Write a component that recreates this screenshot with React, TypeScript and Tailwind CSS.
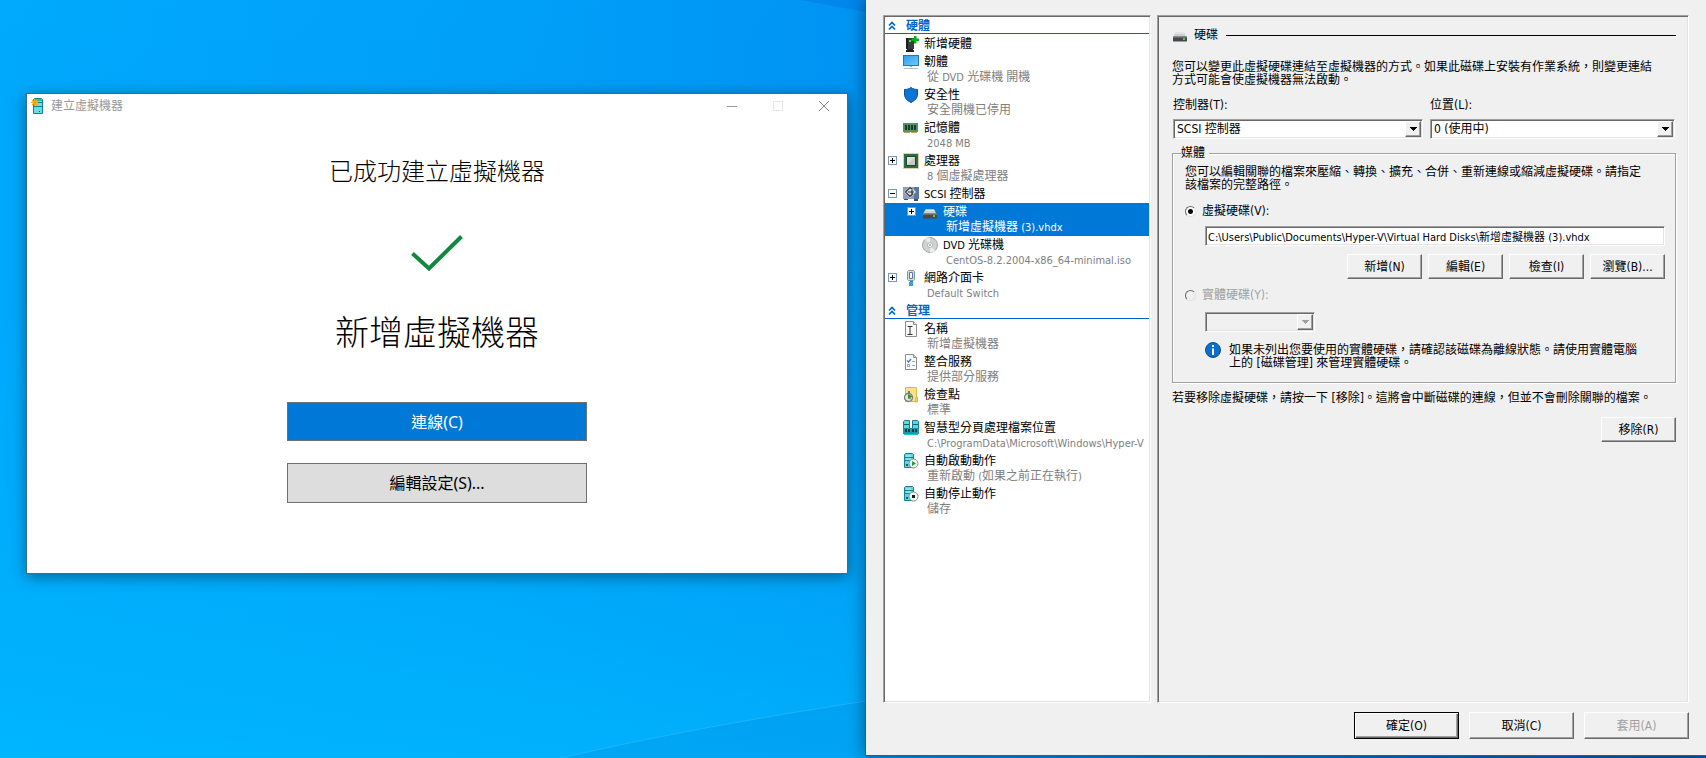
import clsx from "clsx";
import { FC, ReactNode, useState } from "react";

const sunken =
  "border border-t-[#a0a0a0] border-l-[#a0a0a0] border-b-white border-r-white shadow-[inset_1px_1px_0_#696969,inset_-1px_-1px_0_#e3e3e3]";
const raised =
  "border border-t-white border-l-white border-b-[#696969] border-r-[#696969] shadow-[inset_-1px_-1px_0_#a0a0a0]";

// Latin runs in the tree are set one pixel smaller than the CJK text around them
const Mixed: FC<{ text: string }> = ({ text }) => (
  <>
    {text.split(/([\x20-\x7e]+)/).map((part, i) =>
      i % 2 ? (
        <span key={i} className="text-[11px]">
          {part}
        </span>
      ) : (
        part
      ),
    )}
  </>
);

const Svg: FC<{ children: ReactNode }> = ({ children }) => (
  <svg viewBox="0 0 16 16" className="h-4 w-4 shrink-0" aria-hidden="true">
    {children}
  </svg>
);

const DriveIcon = () => (
  <Svg>
    <path d="M3.500 5.500h8.500L14.500 10H1z" fill="#cdcfd1" />
    <path d="M4 5.500h8l1 1.500H3z" fill="#e3e4e6" />
    <rect x="1" y="9.500" width="14" height="5" rx=".5" fill="#48494b" />
    <rect x="1" y="9.500" width="14" height="1" fill="#8a8c8e" />
    <rect x="11" y="11" width="2" height="2" fill="#31e04a" />
  </Svg>
);

const ServerBody = () => (
  <>
    <path d="M1.500 1.500l1-1h7l1 1v13h-9z" fill="#5fd6e0" stroke="#16808c" />
    <path d="M2 4.500h8M2 7.500h8" stroke="#16808c" />
    <path d="M3 3h5M3 6h5" stroke="#b5f2f5" />
    <rect x="3" y="11" width="2" height="2" fill="#0f5e68" />
  </>
);

const icons: Record<string, ReactNode> = {
  add: (
    <Svg>
      <path d="M3 2h8v11H3z" fill="#3b3b3b" />
      <path d="M3 2h2v11H3z" fill="#1d1d1d" />
      <path d="M4 13h6v1H4zM3 14h8v2H3z" fill="#222" />
      <rect x="6" y="4" width="2" height="2" fill="#2bf53c" />
      <path d="M11 0h2.500v2.500H16V5h-2.500v2.500H11V5H8.500V2.500H11z" fill="#0bb11c" />
    </Svg>
  ),
  monitor: (
    <Svg>
      <defs>
        <linearGradient id="screen" x1="0" y1="0" x2="1" y2="1">
          <stop offset="0" stopColor="#2f9cf0" />
          <stop offset="1" stopColor="#6fccfb" />
        </linearGradient>
      </defs>
      <rect x=".5" y="1.500" width="15" height="10" fill="url(#screen)" stroke="#2476b4" />
      <path d="M7 12h2v1H7z" fill="#9fb6c6" />
      <path d="M1 14.500h14" stroke="#a9c3d4" />
    </Svg>
  ),
  shield: (
    <Svg>
      <path d="M8 .5c2 1.500 4 2 6.500 2v4.500c0 4-2.500 6.500-6.500 8.500C4 13.500 1.500 11 1.500 7V2.500C4 2.500 6 2 8 .5z" fill="#0c74d4" stroke="#0a4f94" />
    </Svg>
  ),
  memory: (
    <Svg>
      <path d="M0 3h15v9H0z" fill="#4d9468" />
      <path d="M2 5h2v5H2zM5 5h2v5H5zM8 5h2v5H8zM11 5h2v5h-2z" fill="#24352c" />
      <path d="M1 12h6v1H1zM8 12h6v1H8z" fill="#b9a455" />
    </Svg>
  ),
  cpu: (
    <Svg>
      <rect x=".5" y=".5" width="15" height="15" fill="none" stroke="#c4a54c" strokeDasharray="1 1" />
      <rect x="1" y="1" width="14" height="14" fill="#2d6b49" />
      <rect x="3.500" y="3.500" width="9" height="9" fill="#dfe1df" stroke="#1c4a31" />
      <path d="M4 12l8-8v8z" fill="#c6c9c6" />
    </Svg>
  ),
  scsi: (
    <Svg>
      <path d="M0 1h16v12H0z" fill="#8aa0bd" />
      <path d="M11 1h5v12h-5z" fill="#5a779f" />
      <path d="M1 13h4v1H1zM11 13h4v2h-4z" fill="#36506f" />
      <path d="M7 0l6 6-6 6-6-6z" fill="#e2e4e6" />
      <path d="M9.500 3.500L7 1.500 2.500 6 7 10.500 10 7.500M5 6h6M9 4v4" fill="none" stroke="#2b2f35" strokeWidth="1.200" />
    </Svg>
  ),
  drive: <DriveIcon />,
  disc: (
    <Svg>
      <circle cx="8" cy="8" r="7.500" fill="#cfd1d2" stroke="#a5a8aa" />
      <path d="M8 8L3 2a8 8 0 0 1 5-1.500zM8 8l5 6a8 8 0 0 1-5 1.500z" fill="#eceeee" />
      <circle cx="8" cy="8" r="2.500" fill="#f7f7f7" stroke="#b5b8ba" />
      <circle cx="8" cy="8" r="1" fill="#a5a8aa" />
    </Svg>
  ),
  nic: (
    <Svg>
      <path d="M4.500 1.500l1-1h5l1 1v8l-1 1h-5l-1-1z" fill="#d3dde8" stroke="#7c93ad" />
      <path d="M6.500 2.500h3v6h-3z" fill="#f3f6fa" stroke="#5f7894" />
      <path d="M7 11h3v1H7z" fill="#5f7894" />
      <path d="M6 12h4v4H6z" fill="#36a4dc" />
    </Svg>
  ),
  name: (
    <Svg>
      <path d="M2.500.5h8l3 3v12h-11z" fill="#fafafa" stroke="#8d8d8d" />
      <path d="M10.500.5v3h3" fill="#e0e0e0" stroke="#8d8d8d" />
      <path d="M4.500 5.500h5M4.500 13.500h5M7 5.500v8" stroke="#333" />
    </Svg>
  ),
  services: (
    <Svg>
      <path d="M2.500.5h8l3 3v12h-11z" fill="#fafafa" stroke="#8d8d8d" />
      <path d="M10.500.5v3h3" fill="#e0e0e0" stroke="#8d8d8d" />
      <path d="M4 6.500l1.500 1.500L8 5" fill="none" stroke="#2b7fd4" strokeWidth="1.200" />
      <path d="M9 7.500h3M9 11.500h3" stroke="#9aa9b8" />
      <rect x="4.500" y="10.500" width="2" height="2" fill="none" stroke="#9aa9b8" />
    </Svg>
  ),
  checkpoint: (
    <Svg>
      <path d="M2.500.5h11v14h-11z" fill="#fbe08a" stroke="#dcb84a" />
      <path d="M13 10h1.500v5H12z" fill="#f4cf5e" stroke="#dcb84a" />
      <path d="M5 4h2v2H5z" fill="#777" />
      <circle cx="5.500" cy="10.500" r="4" fill="#e4e4e4" stroke="#7d7d7d" strokeWidth="1.300" />
      <path d="M5 7l4.500 2.500L5 12z" fill="#27962e" />
      <path d="M6 10.500l2 2" stroke="#c33" />
    </Svg>
  ),
  paging: (
    <Svg>
      <path d="M.5 1.500l1-1h5v8h-6zM9.500.5h5l1 1v7h-6z" fill="#5fd6e0" stroke="#16808c" />
      <path d="M1 4.500h5M10 4.500h5" stroke="#0f6570" />
      <path d="M0 8h16v6H0z" fill="#1c98a6" />
      <path d="M2 9h2v3H2zM5 9h2v3H5zM9 9h2v3H9zM12 9h2v3h-2z" fill="#083d45" />
      <path d="M1 14h14v1H1z" fill="#27c4d1" />
    </Svg>
  ),
  start: (
    <Svg>
      <ServerBody />
      <circle cx="10.500" cy="10.500" r="4.500" fill="#f5f5f5" stroke="#8b8b8b" />
      <path d="M9 8l4 2.500L9 13z" fill="#1e9e2c" />
    </Svg>
  ),
  stop: (
    <Svg>
      <ServerBody />
      <circle cx="10.500" cy="10.500" r="4.500" fill="#f5f5f5" stroke="#8b8b8b" />
      <path d="M9 9h3v3H9z" fill="#1c1c1c" />
    </Svg>
  ),
};

type Item = {
  icon: string;
  title: string;
  detail?: string;
  expander?: "plus" | "minus";
  nested?: boolean;
};

const hardware: Item[] = [
  { icon: "add", title: "新增硬體" },
  { icon: "monitor", title: "韌體", detail: "從 DVD 光碟機 開機" },
  { icon: "shield", title: "安全性", detail: "安全開機已停用" },
  { icon: "memory", title: "記憶體", detail: "2048 MB" },
  { icon: "cpu", title: "處理器", detail: "8 個虛擬處理器", expander: "plus" },
  { icon: "scsi", title: "SCSI 控制器", expander: "minus" },
  {
    icon: "drive",
    title: "硬碟",
    detail: "新增虛擬機器 (3).vhdx",
    expander: "plus",
    nested: true,
  },
  {
    icon: "disc",
    title: "DVD 光碟機",
    detail: "CentOS-8.2.2004-x86_64-minimal.iso",
    nested: true,
  },
  { icon: "nic", title: "網路介面卡", detail: "Default Switch", expander: "plus" },
];

const management: Item[] = [
  { icon: "name", title: "名稱", detail: "新增虛擬機器" },
  { icon: "services", title: "整合服務", detail: "提供部分服務" },
  { icon: "checkpoint", title: "檢查點", detail: "標準" },
  {
    icon: "paging",
    title: "智慧型分頁處理檔案位置",
    detail: "C:\\ProgramData\\Microsoft\\Windows\\Hyper-V",
  },
  { icon: "start", title: "自動啟動動作", detail: "重新啟動 (如果之前正在執行)" },
  { icon: "stop", title: "自動停止動作", detail: "儲存" },
];

const Expander: FC<{ kind: "plus" | "minus" }> = ({ kind }) => (
  <svg viewBox="0 0 9 9" className="h-[9px] w-[9px]" shapeRendering="crispEdges" aria-hidden="true">
    <rect x=".5" y=".5" width="8" height="8" fill="#fff" stroke="#7898b5" />
    <path d={kind === "plus" ? "M2 4.500h5M4.500 2v5" : "M2 4.500h5"} stroke="#000" />
  </svg>
);

const TreeSection: FC<{
  title: string;
  items: Item[];
  selected: string;
  onSelect: (title: string) => void;
}> = ({ title, items, selected, onSelect }) => (
  <section>
    <h2 className="mb-px flex h-[17px] items-center border-b border-[#0066cc] pt-px pl-[3px] font-bold text-[#0066cc]">
      <svg viewBox="0 0 8 10" className="mr-[10px] h-[10px] w-2" aria-hidden="true">
        <path d="M1 4.500l3-3 3 3M1 8.500l3-3 3 3" fill="none" stroke="currentColor" strokeWidth="1.700" />
      </svg>
      {title}
    </h2>
    <ul>
      {items.map((item) => {
        const active = item.title === selected;
        return (
          <li key={item.title}>
            <button
              type="button"
              onClick={() => onSelect(item.title)}
              className={clsx(
                "flex w-full items-start overflow-hidden text-left whitespace-nowrap",
                item.nested ? "pl-[22px]" : "pl-[3px]",
                item.detail ? "h-[33px]" : "h-[18px]",
                active && "bg-[#0078d7] text-white",
              )}
            >
              <span className="mt-1 mr-[6px] w-[9px] shrink-0">
                {item.expander && <Expander kind={item.expander} />}
              </span>
              <span className="mt-px">{icons[item.icon]}</span>
              <span className="pl-[5px]">
                <span className="block pt-px leading-[17px]">
                  <Mixed text={item.title} />
                </span>
                {item.detail && (
                  <span
                    className={clsx(
                      "block pl-[3px] leading-3",
                      !active && "text-[#808080]",
                    )}
                  >
                    <Mixed text={item.detail} />
                  </span>
                )}
              </span>
            </button>
          </li>
        );
      })}
    </ul>
  </section>
);

const Button: FC<{ label: string; className: string; disabled?: boolean }> = ({
  label,
  className,
  disabled,
}) => (
  <button
    type="button"
    disabled={disabled}
    className={clsx(
      "bg-[#f0f0f0] whitespace-nowrap disabled:text-[#a0a0a0]",
      className,
    )}
  >
    {label}
  </button>
);

const Dropdown: FC<{
  id: string;
  options: string[];
  disabled?: boolean;
  label?: string;
}> = ({ id, options, disabled, label }) => (
  <div className="relative">
    <select
      id={id}
      disabled={disabled}
      aria-label={label}
      className={clsx(
        "block h-5 w-full appearance-none bg-white px-[3px] text-xs leading-4 outline-none disabled:bg-[#f0f0f0] disabled:opacity-100",
        sunken,
      )}
    >
      {options.map((option) => (
        <option key={option}>{option}</option>
      ))}
    </select>
    <span
      className={clsx(
        "pointer-events-none absolute top-[2px] right-[2px] flex h-4 w-4 items-center justify-center bg-[#f0f0f0]",
        raised,
      )}
    >
      <svg viewBox="0 0 7 4" className="h-1 w-[7px]" shapeRendering="crispEdges" aria-hidden="true">
        <path d="M0 0h7L3.500 4z" fill={disabled ? "#a0a0a0" : "#000"} />
      </svg>
    </span>
  </div>
);

const Radio: FC<{ id: string; label: string; checked?: boolean; disabled?: boolean }> = ({
  id,
  label,
  checked,
  disabled,
}) => (
  <div className="flex h-4 items-center gap-[6px]">
    <input
      id={id}
      type="radio"
      name="media"
      defaultChecked={checked}
      disabled={disabled}
      className="h-[11px] w-[11px] appearance-none rounded-full border border-t-[#696969] border-r-[#e3e3e3] border-b-[#e3e3e3] border-l-[#696969] bg-white checked:bg-[radial-gradient(circle,#000_1px,#000_2px,#fff_3px)] disabled:bg-[#f0f0f0]"
    />
    <label htmlFor={id} className={clsx(disabled && "text-[#a0a0a0]")}>
      {label}
    </label>
  </div>
);

const Lines: FC<{ lines: string[]; className?: string }> = ({ lines, className }) => (
  <p className={clsx("leading-[13px] whitespace-nowrap", className)}>
    {lines.map((line) => (
      <span key={line} className="block">
        {line}
      </span>
    ))}
  </p>
);

const CreatedWindow: FC = () => (
  <main className="z-10 mt-[93px] mr-[17px] ml-[26px] flex flex-col items-center self-start border border-[#3c6c90] bg-white pb-[70px] font-['Noto_Sans','Noto_Sans_CJK_TC',sans-serif] shadow-[0_3px_14px_rgba(0,0,0,0.4)]">
    <header className="flex h-6 w-full items-center pl-1 text-xs text-[#999]">
      <svg viewBox="0 0 16 16" className="h-4 w-4" aria-hidden="true">
        <path d="M2.500 1.500l1-1h7l1 1v14h-9z" fill="#66dce4" stroke="#17828e" />
        <path d="M3 1h8v2H3z" fill="#2db6c3" />
        <path d="M3 4.500h8M3 8.500h8" stroke="#17828e" />
        <rect x="8" y="13" width="1" height="1" fill="#0b4d55" />
        <path d="M3.500 1v7M0 4.500h7M1 2l5 5M6 2L1 7" stroke="#f2a51d" strokeWidth="1.200" />
      </svg>
      <span className="flex-1 pl-1">建立虛擬機器</span>
      <button type="button" aria-label="最小化" className="flex w-[46px] justify-center">
        <svg viewBox="0 0 10 10" className="h-[10px] w-[10px]">
          <path d="M0 5.500h10" stroke="#999" />
        </svg>
      </button>
      <button type="button" aria-label="最大化" disabled className="flex w-[46px] justify-center">
        <svg viewBox="0 0 10 10" className="h-[10px] w-[10px]">
          <path d="M.5.5h9v9h-9z" fill="none" stroke="#e5e5e5" />
        </svg>
      </button>
      <button type="button" aria-label="關閉" className="flex w-[46px] justify-center">
        <svg viewBox="0 0 10 10" className="h-[10px] w-[10px]">
          <path d="M0 0l10 10M10 0L0 10" stroke="#888" />
        </svg>
      </button>
    </header>
    <h1 className="mt-9 text-2xl leading-[34px] font-light">已成功建立虛擬機器</h1>
    <svg viewBox="0 0 52 36" className="mt-[47px] h-9 w-[52px]" aria-hidden="true">
      <path d="M1.500 18.500L18 33.500 50.500 1.500" fill="none" stroke="#10893e" strokeWidth="4" />
    </svg>
    <h2 className="mt-[37px] text-[34px] leading-[48px] font-light">新增虛擬機器</h2>
    <button
      type="button"
      className="mt-[46px] h-[39px] w-[300px] border border-[#707070] bg-[#0078d7] text-white"
    >
      連線(C)
    </button>
    <button
      type="button"
      className="mt-[22px] h-10 w-[300px] border border-[#707070] bg-[#ddd]"
    >
      編輯設定(S)...
    </button>
  </main>
);

const DiskPanel: FC = () => (
  <section className={clsx("flex-1 pt-[11px] pr-3 pl-[14px]", sunken)}>
    <h2 className="flex h-4 items-center">
      <DriveIcon />
      <span className="pl-[6px]">硬碟</span>
      <span className="ml-2 h-px flex-1 bg-black" />
    </h2>
    <Lines
      className="mt-[18px]"
      lines={[
        "您可以變更此虛擬硬碟連結至虛擬機器的方式。如果此磁碟上安裝有作業系統，則變更連結",
        "方式可能會使虛擬機器無法啟動。",
      ]}
    />
    <div className="mt-[10px] grid grid-cols-[250fr_245fr] gap-[7px] px-px">
      <div>
        <label htmlFor="controller" className="mb-[6px] block leading-4">
          控制器(T):
        </label>
        <Dropdown id="controller" options={["SCSI 控制器"]} />
      </div>
      <div>
        <label htmlFor="location" className="mb-[6px] block leading-4">
          位置(L):
        </label>
        <Dropdown id="location" options={["0 (使用中)"]} />
      </div>
    </div>
    <fieldset className="mt-[7px] min-w-0 border border-[#a0a0a0] pr-[10px] pb-3 pl-3 shadow-[1px_1px_0_#fff,inset_1px_1px_0_#fff]">
      <legend className="-ml-1 bg-[#f0f0f0] pr-1 leading-[14px]">媒體</legend>
      <Lines
        className="mt-[6px]"
        lines={[
          "您可以編輯關聯的檔案來壓縮、轉換、擴充、合併、重新連線或縮減虛擬硬碟。請指定",
          "該檔案的完整路徑。",
        ]}
      />
      <div className="mt-[11px]">
        <Radio id="virtual-disk" label="虛擬硬碟(V):" checked />
      </div>
      <div className="pl-5">
        <input
          aria-label="虛擬硬碟"
          defaultValue="C:\Users\Public\Documents\Hyper-V\Virtual Hard Disks\新增虛擬機器 (3).vhdx"
          className={clsx("mt-[7px] block h-5 w-full bg-white px-[2px] text-[11px] outline-none", sunken)}
        />
        <div className="mt-2 flex justify-end gap-[6px]">
          {["新增(N)", "編輯(E)", "檢查(I)", "瀏覽(B)..."].map((label) => (
            <Button key={label} label={label} className={clsx("h-[25px] w-[75px]", raised)} />
          ))}
        </div>
      </div>
      <div className="mt-2">
        <Radio id="physical-disk" label="實體硬碟(Y):" disabled />
      </div>
      <div className="pl-5">
        <div className="mt-[9px] w-[110px]">
          <Dropdown id="physical" options={[""]} disabled label="實體硬碟" />
        </div>
        <div className="mt-[10px] flex gap-2">
          <Svg>
            <circle cx="8" cy="8" r="7.500" fill="#0c6fcb" stroke="#0a4f94" />
            <path d="M7 3h2v2H7zM7 6.500h2V13H7z" fill="#fff" />
          </Svg>
          <Lines
            className="mt-[2px]"
            lines={[
              "如果未列出您要使用的實體硬碟，請確認該磁碟為離線狀態。請使用實體電腦",
              "上的 [磁碟管理] 來管理實體硬碟。",
            ]}
          />
        </div>
      </div>
    </fieldset>
    <Lines
      className="mt-[9px]"
      lines={["若要移除虛擬硬碟，請按一下 [移除]。這將會中斷磁碟的連線，但並不會刪除關聯的檔案。"]}
    />
    <div className="mt-3 flex justify-end">
      <Button label="移除(R)" className={clsx("h-[25px] w-[75px]", raised)} />
    </div>
  </section>
);

const SettingsWindow: FC = () => {
  const [selected, setSelected] = useState("硬碟");
  return (
    <aside className="z-20 mb-[2px] flex flex-col border-b border-l border-[#44586a] bg-[#f0f0f0] px-[17px] pt-[15px] pb-4 font-['DejaVu_Sans_Condensed','Noto_Sans_CJK_TC',sans-serif] text-xs text-black shadow-[0_0_16px_rgba(0,0,0,0.45)]">
      <div className="flex flex-1 gap-[6px]">
        <nav className={clsx("w-[268px] shrink-0 bg-white p-px", sunken)}>
          <TreeSection title="硬體" items={hardware} selected={selected} onSelect={setSelected} />
          <TreeSection title="管理" items={management} selected={selected} onSelect={setSelected} />
        </nav>
        <DiskPanel />
      </div>
      <footer className="mt-[9px] flex justify-end gap-[10px]">
        <Button
          label="確定(O)"
          className="h-[27px] w-[105px] border border-black shadow-[inset_1px_1px_0_#fff,inset_-1px_-1px_0_#696969,inset_-2px_-2px_0_#a0a0a0]"
        />
        <Button label="取消(C)" className={clsx("h-[27px] w-[105px]", raised)} />
        <Button label="套用(A)" disabled className={clsx("h-[27px] w-[105px]", raised)} />
      </footer>
    </aside>
  );
};

export default function App() {
  return (
    <div className="relative grid min-h-screen grid-cols-[865fr_841fr] overflow-hidden bg-[linear-gradient(90deg,#00b0ff_0%,#00a4fb_30%,#0096f4_50%,#0058b0_100%)]">
      {/* light beams of the wallpaper */}
      <svg
        viewBox="0 0 1706 758"
        preserveAspectRatio="none"
        className="absolute inset-0 h-full w-full"
        aria-hidden="true"
      >
        <defs>
          <linearGradient id="glow" x1="0" y1="0" x2="0" y2="1">
            <stop offset="0" stopColor="#0088ec" stopOpacity=".15" />
            <stop offset="1" stopColor="#00b8ff" stopOpacity=".7" />
          </linearGradient>
        </defs>
        <path d="M0 0h866v758H0z" fill="url(#glow)" />
        <path d="M800 0l66 12V0z" fill="#0070e0" opacity=".35" />
        <path d="M560 758Q700 726 866 701v57z" fill="#0088dc" opacity=".25" />
        <path d="M560 758Q700 726 866 701" fill="none" stroke="#3cc0ff" opacity=".5" />
      </svg>
      <CreatedWindow />
      <SettingsWindow />
    </div>
  );
}
